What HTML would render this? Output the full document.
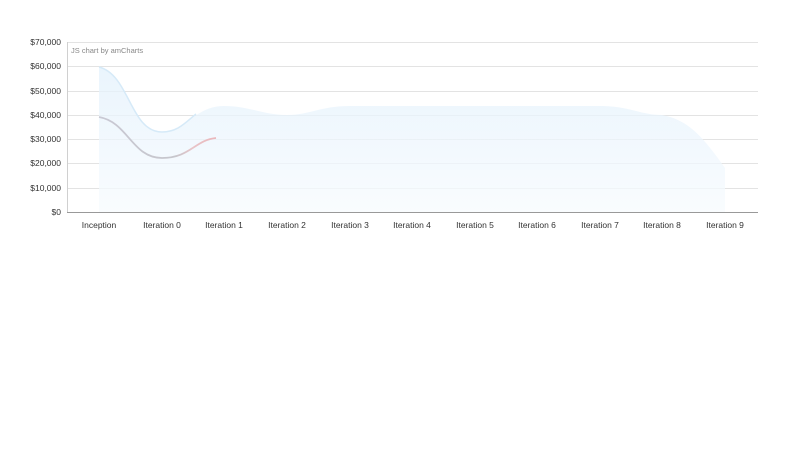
<!DOCTYPE html>
<html><head><meta charset="utf-8"><style>
html,body{margin:0;padding:0;background:#fff;width:800px;height:450px;overflow:hidden}
text{font-family:"Liberation Sans",sans-serif}
</style></head><body>
<svg width="800" height="450" viewBox="0 0 800 450">
<defs>
<linearGradient id="ag" x1="0" y1="0" x2="0" y2="1">
<stop offset="0" stop-color="#e3f1fc"/><stop offset="1" stop-color="#f7fbfe"/>
</linearGradient>
<linearGradient id="lg" x1="99" y1="0" x2="216" y2="0" gradientUnits="userSpaceOnUse">
<stop offset="0" stop-color="#c9c9d4"/><stop offset="0.65" stop-color="#c6c6cc"/><stop offset="0.8" stop-color="#e8c4c8"/><stop offset="1" stop-color="#eab6bb"/>
</linearGradient>
</defs>
<g stroke="#e3e3e3" stroke-width="1">
<line x1="67" y1="42.5" x2="758" y2="42.5"/>
<line x1="67" y1="66.5" x2="758" y2="66.5"/>
<line x1="67" y1="91.5" x2="758" y2="91.5"/>
<line x1="67" y1="115.5" x2="758" y2="115.5"/>
<line x1="67" y1="139.5" x2="758" y2="139.5"/>
<line x1="67" y1="163.5" x2="758" y2="163.5"/>
<line x1="67" y1="188.5" x2="758" y2="188.5"/>
</g>
<path d="M99,67 C130,75 130,132 162,132 C185,132 195,106 224,106 C250,106 262,115 287,115 C310,115 320,106 350,106 L600,106 C630,106 640,115 662,115 C690,120 705,140 725,168 L725,212 L99,212 Z" fill="url(#ag)" opacity="0.75"/>
<path d="M99,67 C130,75 130,132 162,132 C178,132 186,122 196,114" fill="none" stroke="#d6eaf8" stroke-width="1.5"/>
<path d="M99,117 C128,122 132,158 162,158 C190,158 195,140 216,138" fill="none" stroke="url(#lg)" stroke-width="1.8"/>
<line x1="67.5" y1="42" x2="67.5" y2="212" stroke="#d0d0d0"/>
<line x1="67" y1="212.5" x2="758" y2="212.5" stroke="#999"/>
<text x="71" y="53" font-size="7.5" fill="#888">JS chart by amCharts</text>
<g font-size="8.5" fill="#333" text-anchor="end">
<text x="61" y="45">$70,000</text><text x="61" y="69">$60,000</text><text x="61" y="94">$50,000</text>
<text x="61" y="118">$40,000</text><text x="61" y="142">$30,000</text><text x="61" y="166">$20,000</text>
<text x="61" y="191">$10,000</text><text x="61" y="215">$0</text>
</g>
<g font-size="8.5" fill="#333" text-anchor="middle">
<text x="99" y="228">Inception</text><text x="162" y="228">Iteration 0</text><text x="224" y="228">Iteration 1</text>
<text x="287" y="228">Iteration 2</text><text x="350" y="228">Iteration 3</text><text x="412" y="228">Iteration 4</text>
<text x="475" y="228">Iteration 5</text><text x="537" y="228">Iteration 6</text><text x="600" y="228">Iteration 7</text>
<text x="662" y="228">Iteration 8</text><text x="725" y="228">Iteration 9</text>
</g>
</svg>
</body></html>
